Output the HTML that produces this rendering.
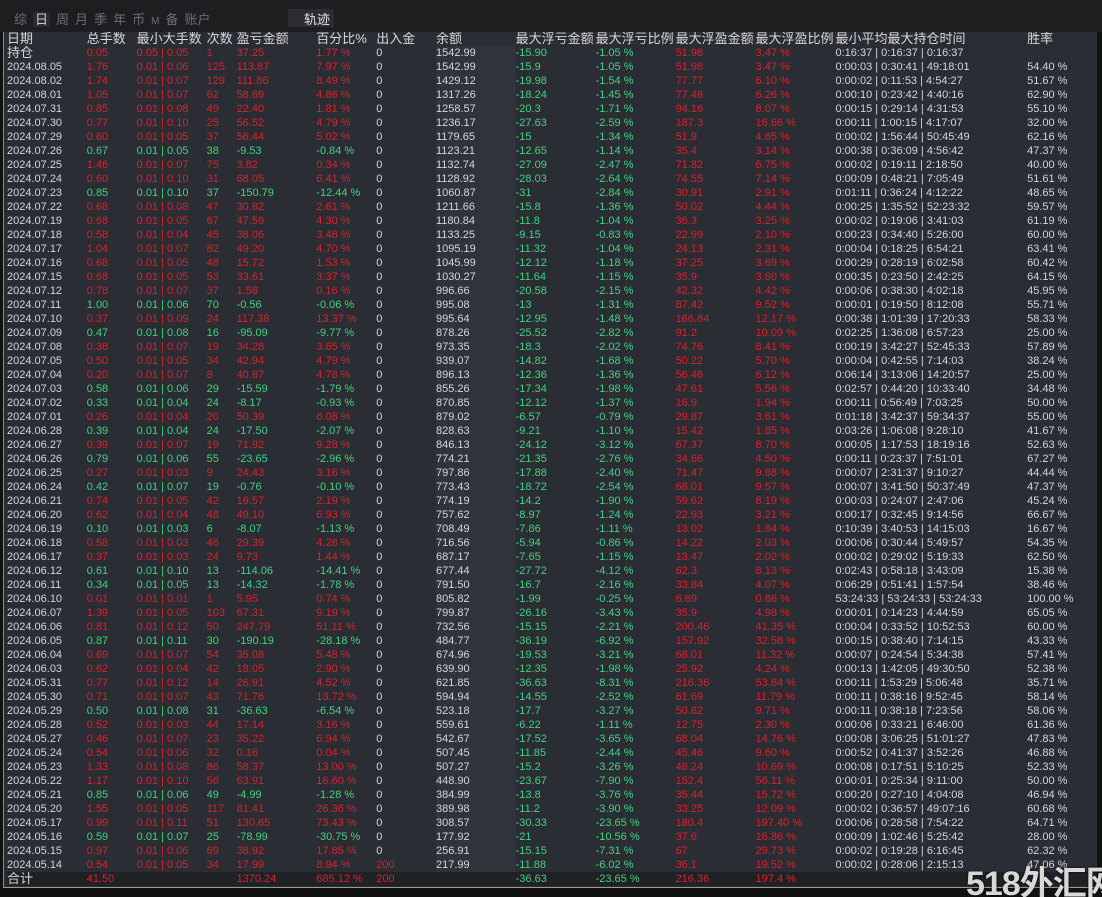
<!DOCTYPE html>
<html><head><meta charset="utf-8"><style>
*{margin:0;padding:0;box-sizing:border-box}
html,body{width:1102px;height:897px;overflow:hidden}
body{background:#111;position:relative;font-family:"Liberation Sans","Noto Sans CJK SC",sans-serif;font-size:11px;color:#d4d6da}
#top{position:absolute;left:0;top:0;width:1102px;height:32px;background:#1d1e20}
#tabs{position:absolute;left:14px;top:9px;color:#6a6d72;font-size:13px;letter-spacing:0}
#tabs span{margin-right:6px}
#tabs .on{color:#c8cacd;background:#2a2c30;padding:0 2px}
#traj{position:absolute;left:288px;top:9px;width:46px;height:18px;background:#2b2d31;color:#e0e0e0;font-size:13px;padding-left:16px}
#wrap{position:absolute;left:3px;top:32px;width:1094px;height:856px;background:#2a2d34;border-left:1px solid #888;border-bottom:1px solid #999}
table{border-collapse:collapse;table-layout:fixed;position:absolute;left:3px;top:0}
td{height:14px;line-height:14px;white-space:nowrap;overflow:hidden;padding:0;font-size:11px}
tr.h td{height:14px;color:#d8d8d8;font-size:13px}
.rr td.c{color:#d8222c}
.gg td.c{color:#43d17f}
td.g{color:#43d17f}
td.r{color:#d8222c}
td.b{background:#30333a}
tr.tot td{background:#1f2124}
#wm{position:absolute;left:966px;top:856px;font-size:34px;font-weight:bold;color:#d8d8d8;letter-spacing:-1px;white-space:nowrap;text-shadow:0 0 2px #000}
</style></head><body>
<div id="top"><div id="tabs"><span>综</span><span class="on">日</span><span>周</span><span>月</span><span>季</span><span>年</span><span>币</span><span style="font-size:10px">M</span><span>备</span><span>账户</span></div><div id="traj">轨迹</div></div>
<div id="wrap">
<table>
<colgroup><col style="width:80px"><col style="width:50px"><col style="width:70px"><col style="width:30px"><col style="width:80px"><col style="width:60px"><col style="width:60px"><col style="width:80px"><col style="width:80px"><col style="width:80px"><col style="width:80px"><col style="width:80px"><col style="width:192px"><col style="width:70px"></colgroup>
<tr class="h"><td>日期</td><td>总手数</td><td>最小大手数</td><td>次数</td><td>盈亏金额</td><td>百分比%</td><td>出入金</td><td>余额</td><td>最大浮亏金额</td><td>最大浮亏比例</td><td>最大浮盈金额</td><td>最大浮盈比例</td><td>最小平均最大持仓时间</td><td>胜率</td></tr>
<tr class="rr"><td style="font-size:13px">持仓</td><td class="c">0.05</td><td class="c">0.05 | 0.05</td><td class="c">1</td><td class="c">37.25</td><td class="c">1.77 %</td><td>0</td><td class="b">1542.99</td><td class="g">-15.90</td><td class="g">-1.05 %</td><td class="r">51.98</td><td class="r">3.47 %</td><td>0:16:37 | 0:16:37 | 0:16:37</td><td></td></tr>
<tr class="rr"><td>2024.08.05</td><td class="c">1.76</td><td class="c">0.01 | 0.06</td><td class="c">125</td><td class="c">113.87</td><td class="c">7.97 %</td><td>0</td><td class="b">1542.99</td><td class="g">-15.9</td><td class="g">-1.05 %</td><td class="r">51.98</td><td class="r">3.47 %</td><td>0:00:03 | 0:30:41 | 49:18:01</td><td>54.40 %</td></tr>
<tr class="rr"><td>2024.08.02</td><td class="c">1.74</td><td class="c">0.01 | 0.07</td><td class="c">129</td><td class="c">111.86</td><td class="c">8.49 %</td><td>0</td><td class="b">1429.12</td><td class="g">-19.98</td><td class="g">-1.54 %</td><td class="r">77.77</td><td class="r">6.10 %</td><td>0:00:02 | 0:11:53 | 4:54:27</td><td>51.67 %</td></tr>
<tr class="rr"><td>2024.08.01</td><td class="c">1.05</td><td class="c">0.01 | 0.07</td><td class="c">62</td><td class="c">58.69</td><td class="c">4.86 %</td><td>0</td><td class="b">1317.26</td><td class="g">-18.24</td><td class="g">-1.45 %</td><td class="r">77.48</td><td class="r">6.26 %</td><td>0:00:10 | 0:23:42 | 4:40:16</td><td>62.90 %</td></tr>
<tr class="rr"><td>2024.07.31</td><td class="c">0.85</td><td class="c">0.01 | 0.08</td><td class="c">49</td><td class="c">22.40</td><td class="c">1.81 %</td><td>0</td><td class="b">1258.57</td><td class="g">-20.3</td><td class="g">-1.71 %</td><td class="r">94.16</td><td class="r">8.07 %</td><td>0:00:15 | 0:29:14 | 4:31:53</td><td>55.10 %</td></tr>
<tr class="rr"><td>2024.07.30</td><td class="c">0.77</td><td class="c">0.01 | 0.10</td><td class="c">25</td><td class="c">56.52</td><td class="c">4.79 %</td><td>0</td><td class="b">1236.17</td><td class="g">-27.63</td><td class="g">-2.59 %</td><td class="r">187.3</td><td class="r">16.66 %</td><td>0:00:11 | 1:00:15 | 4:17:07</td><td>32.00 %</td></tr>
<tr class="rr"><td>2024.07.29</td><td class="c">0.60</td><td class="c">0.01 | 0.05</td><td class="c">37</td><td class="c">56.44</td><td class="c">5.02 %</td><td>0</td><td class="b">1179.65</td><td class="g">-15</td><td class="g">-1.34 %</td><td class="r">51.9</td><td class="r">4.65 %</td><td>0:00:02 | 1:56:44 | 50:45:49</td><td>62.16 %</td></tr>
<tr class="gg"><td>2024.07.26</td><td class="c">0.67</td><td class="c">0.01 | 0.05</td><td class="c">38</td><td class="c">-9.53</td><td class="c">-0.84 %</td><td>0</td><td class="b">1123.21</td><td class="g">-12.65</td><td class="g">-1.14 %</td><td class="r">35.4</td><td class="r">3.14 %</td><td>0:00:38 | 0:36:09 | 4:56:42</td><td>47.37 %</td></tr>
<tr class="rr"><td>2024.07.25</td><td class="c">1.46</td><td class="c">0.01 | 0.07</td><td class="c">75</td><td class="c">3.82</td><td class="c">0.34 %</td><td>0</td><td class="b">1132.74</td><td class="g">-27.09</td><td class="g">-2.47 %</td><td class="r">71.82</td><td class="r">6.75 %</td><td>0:00:02 | 0:19:11 | 2:18:50</td><td>40.00 %</td></tr>
<tr class="rr"><td>2024.07.24</td><td class="c">0.60</td><td class="c">0.01 | 0.10</td><td class="c">31</td><td class="c">68.05</td><td class="c">6.41 %</td><td>0</td><td class="b">1128.92</td><td class="g">-28.03</td><td class="g">-2.64 %</td><td class="r">74.55</td><td class="r">7.14 %</td><td>0:00:09 | 0:48:21 | 7:05:49</td><td>51.61 %</td></tr>
<tr class="gg"><td>2024.07.23</td><td class="c">0.85</td><td class="c">0.01 | 0.10</td><td class="c">37</td><td class="c">-150.79</td><td class="c">-12.44 %</td><td>0</td><td class="b">1060.87</td><td class="g">-31</td><td class="g">-2.84 %</td><td class="r">30.91</td><td class="r">2.91 %</td><td>0:01:11 | 0:36:24 | 4:12:22</td><td>48.65 %</td></tr>
<tr class="rr"><td>2024.07.22</td><td class="c">0.68</td><td class="c">0.01 | 0.08</td><td class="c">47</td><td class="c">30.82</td><td class="c">2.61 %</td><td>0</td><td class="b">1211.66</td><td class="g">-15.8</td><td class="g">-1.36 %</td><td class="r">50.02</td><td class="r">4.44 %</td><td>0:00:25 | 1:35:52 | 52:23:32</td><td>59.57 %</td></tr>
<tr class="rr"><td>2024.07.19</td><td class="c">0.68</td><td class="c">0.01 | 0.05</td><td class="c">67</td><td class="c">47.59</td><td class="c">4.30 %</td><td>0</td><td class="b">1180.84</td><td class="g">-11.8</td><td class="g">-1.04 %</td><td class="r">36.3</td><td class="r">3.25 %</td><td>0:00:02 | 0:19:06 | 3:41:03</td><td>61.19 %</td></tr>
<tr class="rr"><td>2024.07.18</td><td class="c">0.58</td><td class="c">0.01 | 0.04</td><td class="c">45</td><td class="c">38.06</td><td class="c">3.48 %</td><td>0</td><td class="b">1133.25</td><td class="g">-9.15</td><td class="g">-0.83 %</td><td class="r">22.99</td><td class="r">2.10 %</td><td>0:00:23 | 0:34:40 | 5:26:00</td><td>60.00 %</td></tr>
<tr class="rr"><td>2024.07.17</td><td class="c">1.04</td><td class="c">0.01 | 0.07</td><td class="c">82</td><td class="c">49.20</td><td class="c">4.70 %</td><td>0</td><td class="b">1095.19</td><td class="g">-11.32</td><td class="g">-1.04 %</td><td class="r">24.13</td><td class="r">2.31 %</td><td>0:00:04 | 0:18:25 | 6:54:21</td><td>63.41 %</td></tr>
<tr class="rr"><td>2024.07.16</td><td class="c">0.68</td><td class="c">0.01 | 0.05</td><td class="c">48</td><td class="c">15.72</td><td class="c">1.53 %</td><td>0</td><td class="b">1045.99</td><td class="g">-12.12</td><td class="g">-1.18 %</td><td class="r">37.25</td><td class="r">3.69 %</td><td>0:00:29 | 0:28:19 | 6:02:58</td><td>60.42 %</td></tr>
<tr class="rr"><td>2024.07.15</td><td class="c">0.68</td><td class="c">0.01 | 0.05</td><td class="c">53</td><td class="c">33.61</td><td class="c">3.37 %</td><td>0</td><td class="b">1030.27</td><td class="g">-11.64</td><td class="g">-1.15 %</td><td class="r">35.9</td><td class="r">3.60 %</td><td>0:00:35 | 0:23:50 | 2:42:25</td><td>64.15 %</td></tr>
<tr class="rr"><td>2024.07.12</td><td class="c">0.78</td><td class="c">0.01 | 0.07</td><td class="c">37</td><td class="c">1.58</td><td class="c">0.16 %</td><td>0</td><td class="b">996.66</td><td class="g">-20.58</td><td class="g">-2.15 %</td><td class="r">42.32</td><td class="r">4.42 %</td><td>0:00:06 | 0:38:30 | 4:02:18</td><td>45.95 %</td></tr>
<tr class="gg"><td>2024.07.11</td><td class="c">1.00</td><td class="c">0.01 | 0.06</td><td class="c">70</td><td class="c">-0.56</td><td class="c">-0.06 %</td><td>0</td><td class="b">995.08</td><td class="g">-13</td><td class="g">-1.31 %</td><td class="r">87.42</td><td class="r">9.52 %</td><td>0:00:01 | 0:19:50 | 8:12:08</td><td>55.71 %</td></tr>
<tr class="rr"><td>2024.07.10</td><td class="c">0.37</td><td class="c">0.01 | 0.09</td><td class="c">24</td><td class="c">117.38</td><td class="c">13.37 %</td><td>0</td><td class="b">995.64</td><td class="g">-12.95</td><td class="g">-1.48 %</td><td class="r">166.84</td><td class="r">12.17 %</td><td>0:00:38 | 1:01:39 | 17:20:33</td><td>58.33 %</td></tr>
<tr class="gg"><td>2024.07.09</td><td class="c">0.47</td><td class="c">0.01 | 0.08</td><td class="c">16</td><td class="c">-95.09</td><td class="c">-9.77 %</td><td>0</td><td class="b">878.26</td><td class="g">-25.52</td><td class="g">-2.82 %</td><td class="r">91.2</td><td class="r">10.09 %</td><td>0:02:25 | 1:36:08 | 6:57:23</td><td>25.00 %</td></tr>
<tr class="rr"><td>2024.07.08</td><td class="c">0.38</td><td class="c">0.01 | 0.07</td><td class="c">19</td><td class="c">34.28</td><td class="c">3.65 %</td><td>0</td><td class="b">973.35</td><td class="g">-18.3</td><td class="g">-2.02 %</td><td class="r">74.76</td><td class="r">8.41 %</td><td>0:00:19 | 3:42:27 | 52:45:33</td><td>57.89 %</td></tr>
<tr class="rr"><td>2024.07.05</td><td class="c">0.50</td><td class="c">0.01 | 0.05</td><td class="c">34</td><td class="c">42.94</td><td class="c">4.79 %</td><td>0</td><td class="b">939.07</td><td class="g">-14.82</td><td class="g">-1.68 %</td><td class="r">50.22</td><td class="r">5.70 %</td><td>0:00:04 | 0:42:55 | 7:14:03</td><td>38.24 %</td></tr>
<tr class="rr"><td>2024.07.04</td><td class="c">0.20</td><td class="c">0.01 | 0.07</td><td class="c">8</td><td class="c">40.87</td><td class="c">4.78 %</td><td>0</td><td class="b">896.13</td><td class="g">-12.36</td><td class="g">-1.36 %</td><td class="r">56.46</td><td class="r">6.12 %</td><td>0:06:14 | 3:13:06 | 14:20:57</td><td>25.00 %</td></tr>
<tr class="gg"><td>2024.07.03</td><td class="c">0.58</td><td class="c">0.01 | 0.06</td><td class="c">29</td><td class="c">-15.59</td><td class="c">-1.79 %</td><td>0</td><td class="b">855.26</td><td class="g">-17.34</td><td class="g">-1.98 %</td><td class="r">47.61</td><td class="r">5.56 %</td><td>0:02:57 | 0:44:20 | 10:33:40</td><td>34.48 %</td></tr>
<tr class="gg"><td>2024.07.02</td><td class="c">0.33</td><td class="c">0.01 | 0.04</td><td class="c">24</td><td class="c">-8.17</td><td class="c">-0.93 %</td><td>0</td><td class="b">870.85</td><td class="g">-12.12</td><td class="g">-1.37 %</td><td class="r">16.9</td><td class="r">1.94 %</td><td>0:00:11 | 0:56:49 | 7:03:25</td><td>50.00 %</td></tr>
<tr class="rr"><td>2024.07.01</td><td class="c">0.26</td><td class="c">0.01 | 0.04</td><td class="c">20</td><td class="c">50.39</td><td class="c">6.08 %</td><td>0</td><td class="b">879.02</td><td class="g">-6.57</td><td class="g">-0.79 %</td><td class="r">29.87</td><td class="r">3.61 %</td><td>0:01:18 | 3:42:37 | 59:34:37</td><td>55.00 %</td></tr>
<tr class="gg"><td>2024.06.28</td><td class="c">0.39</td><td class="c">0.01 | 0.04</td><td class="c">24</td><td class="c">-17.50</td><td class="c">-2.07 %</td><td>0</td><td class="b">828.63</td><td class="g">-9.21</td><td class="g">-1.10 %</td><td class="r">15.42</td><td class="r">1.85 %</td><td>0:03:26 | 1:06:08 | 9:28:10</td><td>41.67 %</td></tr>
<tr class="rr"><td>2024.06.27</td><td class="c">0.39</td><td class="c">0.01 | 0.07</td><td class="c">19</td><td class="c">71.92</td><td class="c">9.28 %</td><td>0</td><td class="b">846.13</td><td class="g">-24.12</td><td class="g">-3.12 %</td><td class="r">67.37</td><td class="r">8.70 %</td><td>0:00:05 | 1:17:53 | 18:19:16</td><td>52.63 %</td></tr>
<tr class="gg"><td>2024.06.26</td><td class="c">0.79</td><td class="c">0.01 | 0.06</td><td class="c">55</td><td class="c">-23.65</td><td class="c">-2.96 %</td><td>0</td><td class="b">774.21</td><td class="g">-21.35</td><td class="g">-2.76 %</td><td class="r">34.66</td><td class="r">4.50 %</td><td>0:00:11 | 0:23:37 | 7:51:01</td><td>67.27 %</td></tr>
<tr class="rr"><td>2024.06.25</td><td class="c">0.27</td><td class="c">0.01 | 0.03</td><td class="c">9</td><td class="c">24.43</td><td class="c">3.16 %</td><td>0</td><td class="b">797.86</td><td class="g">-17.88</td><td class="g">-2.40 %</td><td class="r">71.47</td><td class="r">9.88 %</td><td>0:00:07 | 2:31:37 | 9:10:27</td><td>44.44 %</td></tr>
<tr class="gg"><td>2024.06.24</td><td class="c">0.42</td><td class="c">0.01 | 0.07</td><td class="c">19</td><td class="c">-0.76</td><td class="c">-0.10 %</td><td>0</td><td class="b">773.43</td><td class="g">-18.72</td><td class="g">-2.54 %</td><td class="r">68.01</td><td class="r">9.57 %</td><td>0:00:07 | 3:41:50 | 50:37:49</td><td>47.37 %</td></tr>
<tr class="rr"><td>2024.06.21</td><td class="c">0.74</td><td class="c">0.01 | 0.05</td><td class="c">42</td><td class="c">16.57</td><td class="c">2.19 %</td><td>0</td><td class="b">774.19</td><td class="g">-14.2</td><td class="g">-1.90 %</td><td class="r">59.62</td><td class="r">8.19 %</td><td>0:00:03 | 0:24:07 | 2:47:06</td><td>45.24 %</td></tr>
<tr class="rr"><td>2024.06.20</td><td class="c">0.62</td><td class="c">0.01 | 0.04</td><td class="c">48</td><td class="c">49.10</td><td class="c">6.93 %</td><td>0</td><td class="b">757.62</td><td class="g">-8.97</td><td class="g">-1.24 %</td><td class="r">22.93</td><td class="r">3.21 %</td><td>0:00:17 | 0:32:45 | 9:14:56</td><td>66.67 %</td></tr>
<tr class="gg"><td>2024.06.19</td><td class="c">0.10</td><td class="c">0.01 | 0.03</td><td class="c">6</td><td class="c">-8.07</td><td class="c">-1.13 %</td><td>0</td><td class="b">708.49</td><td class="g">-7.86</td><td class="g">-1.11 %</td><td class="r">13.02</td><td class="r">1.84 %</td><td>0:10:39 | 3:40:53 | 14:15:03</td><td>16.67 %</td></tr>
<tr class="rr"><td>2024.06.18</td><td class="c">0.58</td><td class="c">0.01 | 0.03</td><td class="c">46</td><td class="c">29.39</td><td class="c">4.28 %</td><td>0</td><td class="b">716.56</td><td class="g">-5.94</td><td class="g">-0.86 %</td><td class="r">14.22</td><td class="r">2.03 %</td><td>0:00:06 | 0:30:44 | 5:49:57</td><td>54.35 %</td></tr>
<tr class="rr"><td>2024.06.17</td><td class="c">0.37</td><td class="c">0.01 | 0.03</td><td class="c">24</td><td class="c">9.73</td><td class="c">1.44 %</td><td>0</td><td class="b">687.17</td><td class="g">-7.65</td><td class="g">-1.15 %</td><td class="r">13.47</td><td class="r">2.02 %</td><td>0:00:02 | 0:29:02 | 5:19:33</td><td>62.50 %</td></tr>
<tr class="gg"><td>2024.06.12</td><td class="c">0.61</td><td class="c">0.01 | 0.10</td><td class="c">13</td><td class="c">-114.06</td><td class="c">-14.41 %</td><td>0</td><td class="b">677.44</td><td class="g">-27.72</td><td class="g">-4.12 %</td><td class="r">62.3</td><td class="r">8.13 %</td><td>0:02:43 | 0:58:18 | 3:43:09</td><td>15.38 %</td></tr>
<tr class="gg"><td>2024.06.11</td><td class="c">0.34</td><td class="c">0.01 | 0.05</td><td class="c">13</td><td class="c">-14.32</td><td class="c">-1.78 %</td><td>0</td><td class="b">791.50</td><td class="g">-16.7</td><td class="g">-2.16 %</td><td class="r">33.84</td><td class="r">4.07 %</td><td>0:06:29 | 0:51:41 | 1:57:54</td><td>38.46 %</td></tr>
<tr class="rr"><td>2024.06.10</td><td class="c">0.01</td><td class="c">0.01 | 0.01</td><td class="c">1</td><td class="c">5.95</td><td class="c">0.74 %</td><td>0</td><td class="b">805.82</td><td class="g">-1.99</td><td class="g">-0.25 %</td><td class="r">6.89</td><td class="r">0.86 %</td><td>53:24:33 | 53:24:33 | 53:24:33</td><td>100.00 %</td></tr>
<tr class="rr"><td>2024.06.07</td><td class="c">1.39</td><td class="c">0.01 | 0.05</td><td class="c">103</td><td class="c">67.31</td><td class="c">9.19 %</td><td>0</td><td class="b">799.87</td><td class="g">-26.16</td><td class="g">-3.43 %</td><td class="r">35.9</td><td class="r">4.98 %</td><td>0:00:01 | 0:14:23 | 4:44:59</td><td>65.05 %</td></tr>
<tr class="rr"><td>2024.06.06</td><td class="c">0.81</td><td class="c">0.01 | 0.12</td><td class="c">50</td><td class="c">247.79</td><td class="c">51.11 %</td><td>0</td><td class="b">732.56</td><td class="g">-15.15</td><td class="g">-2.21 %</td><td class="r">200.46</td><td class="r">41.35 %</td><td>0:00:04 | 0:33:52 | 10:52:53</td><td>60.00 %</td></tr>
<tr class="gg"><td>2024.06.05</td><td class="c">0.87</td><td class="c">0.01 | 0.11</td><td class="c">30</td><td class="c">-190.19</td><td class="c">-28.18 %</td><td>0</td><td class="b">484.77</td><td class="g">-36.19</td><td class="g">-6.92 %</td><td class="r">157.92</td><td class="r">32.58 %</td><td>0:00:15 | 0:38:40 | 7:14:15</td><td>43.33 %</td></tr>
<tr class="rr"><td>2024.06.04</td><td class="c">0.69</td><td class="c">0.01 | 0.07</td><td class="c">54</td><td class="c">35.08</td><td class="c">5.48 %</td><td>0</td><td class="b">674.96</td><td class="g">-19.53</td><td class="g">-3.21 %</td><td class="r">68.01</td><td class="r">11.32 %</td><td>0:00:07 | 0:24:54 | 5:34:38</td><td>57.41 %</td></tr>
<tr class="rr"><td>2024.06.03</td><td class="c">0.62</td><td class="c">0.01 | 0.04</td><td class="c">42</td><td class="c">18.05</td><td class="c">2.90 %</td><td>0</td><td class="b">639.90</td><td class="g">-12.35</td><td class="g">-1.98 %</td><td class="r">25.92</td><td class="r">4.24 %</td><td>0:00:13 | 1:42:05 | 49:30:50</td><td>52.38 %</td></tr>
<tr class="rr"><td>2024.05.31</td><td class="c">0.77</td><td class="c">0.01 | 0.12</td><td class="c">14</td><td class="c">26.91</td><td class="c">4.52 %</td><td>0</td><td class="b">621.85</td><td class="g">-36.63</td><td class="g">-8.31 %</td><td class="r">216.36</td><td class="r">53.84 %</td><td>0:00:11 | 1:53:29 | 5:06:48</td><td>35.71 %</td></tr>
<tr class="rr"><td>2024.05.30</td><td class="c">0.71</td><td class="c">0.01 | 0.07</td><td class="c">43</td><td class="c">71.76</td><td class="c">13.72 %</td><td>0</td><td class="b">594.94</td><td class="g">-14.55</td><td class="g">-2.52 %</td><td class="r">61.69</td><td class="r">11.79 %</td><td>0:00:11 | 0:38:16 | 9:52:45</td><td>58.14 %</td></tr>
<tr class="gg"><td>2024.05.29</td><td class="c">0.50</td><td class="c">0.01 | 0.08</td><td class="c">31</td><td class="c">-36.63</td><td class="c">-6.54 %</td><td>0</td><td class="b">523.18</td><td class="g">-17.7</td><td class="g">-3.27 %</td><td class="r">50.82</td><td class="r">9.71 %</td><td>0:00:11 | 0:38:18 | 7:23:56</td><td>58.06 %</td></tr>
<tr class="rr"><td>2024.05.28</td><td class="c">0.52</td><td class="c">0.01 | 0.03</td><td class="c">44</td><td class="c">17.14</td><td class="c">3.16 %</td><td>0</td><td class="b">559.61</td><td class="g">-6.22</td><td class="g">-1.11 %</td><td class="r">12.75</td><td class="r">2.30 %</td><td>0:00:06 | 0:33:21 | 6:46:00</td><td>61.36 %</td></tr>
<tr class="rr"><td>2024.05.27</td><td class="c">0.46</td><td class="c">0.01 | 0.07</td><td class="c">23</td><td class="c">35.22</td><td class="c">6.94 %</td><td>0</td><td class="b">542.67</td><td class="g">-17.52</td><td class="g">-3.65 %</td><td class="r">68.04</td><td class="r">14.76 %</td><td>0:00:08 | 3:06:25 | 51:01:27</td><td>47.83 %</td></tr>
<tr class="rr"><td>2024.05.24</td><td class="c">0.54</td><td class="c">0.01 | 0.06</td><td class="c">32</td><td class="c">0.16</td><td class="c">0.04 %</td><td>0</td><td class="b">507.45</td><td class="g">-11.85</td><td class="g">-2.44 %</td><td class="r">45.46</td><td class="r">9.60 %</td><td>0:00:52 | 0:41:37 | 3:52:26</td><td>46.88 %</td></tr>
<tr class="rr"><td>2024.05.23</td><td class="c">1.33</td><td class="c">0.01 | 0.08</td><td class="c">86</td><td class="c">58.37</td><td class="c">13.00 %</td><td>0</td><td class="b">507.27</td><td class="g">-15.2</td><td class="g">-3.26 %</td><td class="r">48.24</td><td class="r">10.69 %</td><td>0:00:08 | 0:17:51 | 5:10:25</td><td>52.33 %</td></tr>
<tr class="rr"><td>2024.05.22</td><td class="c">1.17</td><td class="c">0.01 | 0.10</td><td class="c">56</td><td class="c">63.91</td><td class="c">16.60 %</td><td>0</td><td class="b">448.90</td><td class="g">-23.67</td><td class="g">-7.90 %</td><td class="r">152.4</td><td class="r">56.11 %</td><td>0:00:01 | 0:25:34 | 9:11:00</td><td>50.00 %</td></tr>
<tr class="gg"><td>2024.05.21</td><td class="c">0.85</td><td class="c">0.01 | 0.06</td><td class="c">49</td><td class="c">-4.99</td><td class="c">-1.28 %</td><td>0</td><td class="b">384.99</td><td class="g">-13.8</td><td class="g">-3.76 %</td><td class="r">35.44</td><td class="r">15.72 %</td><td>0:00:20 | 0:27:10 | 4:04:08</td><td>46.94 %</td></tr>
<tr class="rr"><td>2024.05.20</td><td class="c">1.55</td><td class="c">0.01 | 0.05</td><td class="c">117</td><td class="c">81.41</td><td class="c">26.36 %</td><td>0</td><td class="b">389.98</td><td class="g">-11.2</td><td class="g">-3.90 %</td><td class="r">33.25</td><td class="r">12.09 %</td><td>0:00:02 | 0:36:57 | 49:07:16</td><td>60.68 %</td></tr>
<tr class="rr"><td>2024.05.17</td><td class="c">0.99</td><td class="c">0.01 | 0.11</td><td class="c">51</td><td class="c">130.65</td><td class="c">73.43 %</td><td>0</td><td class="b">308.57</td><td class="g">-30.33</td><td class="g">-23.65 %</td><td class="r">180.4</td><td class="r">197.40 %</td><td>0:00:06 | 0:28:58 | 7:54:22</td><td>64.71 %</td></tr>
<tr class="gg"><td>2024.05.16</td><td class="c">0.59</td><td class="c">0.01 | 0.07</td><td class="c">25</td><td class="c">-78.99</td><td class="c">-30.75 %</td><td>0</td><td class="b">177.92</td><td class="g">-21</td><td class="g">-10.56 %</td><td class="r">37.6</td><td class="r">16.86 %</td><td>0:00:09 | 1:02:46 | 5:25:42</td><td>28.00 %</td></tr>
<tr class="rr"><td>2024.05.15</td><td class="c">0.97</td><td class="c">0.01 | 0.06</td><td class="c">69</td><td class="c">38.92</td><td class="c">17.85 %</td><td>0</td><td class="b">256.91</td><td class="g">-15.15</td><td class="g">-7.31 %</td><td class="r">67</td><td class="r">29.73 %</td><td>0:00:02 | 0:19:28 | 6:16:45</td><td>62.32 %</td></tr>
<tr class="rr"><td>2024.05.14</td><td class="c">0.54</td><td class="c">0.01 | 0.05</td><td class="c">34</td><td class="c">17.99</td><td class="c">8.94 %</td><td class="r">200</td><td class="b">217.99</td><td class="g">-11.88</td><td class="g">-6.02 %</td><td class="r">36.1</td><td class="r">19.52 %</td><td>0:00:02 | 0:28:06 | 2:15:13</td><td>47.06 %</td></tr>
<tr class="tot"><td style="font-size:13px">合计</td><td class="r">41.50</td><td></td><td></td><td class="r">1370.24</td><td class="r">685.12 %</td><td class="r">200</td><td></td><td class="g">-36.63</td><td class="g">-23.65 %</td><td class="r">216.36</td><td class="r">197.4 %</td><td></td><td></td></tr>
</table>
</div>
<div id="wm">518外汇网</div>
</body></html>
